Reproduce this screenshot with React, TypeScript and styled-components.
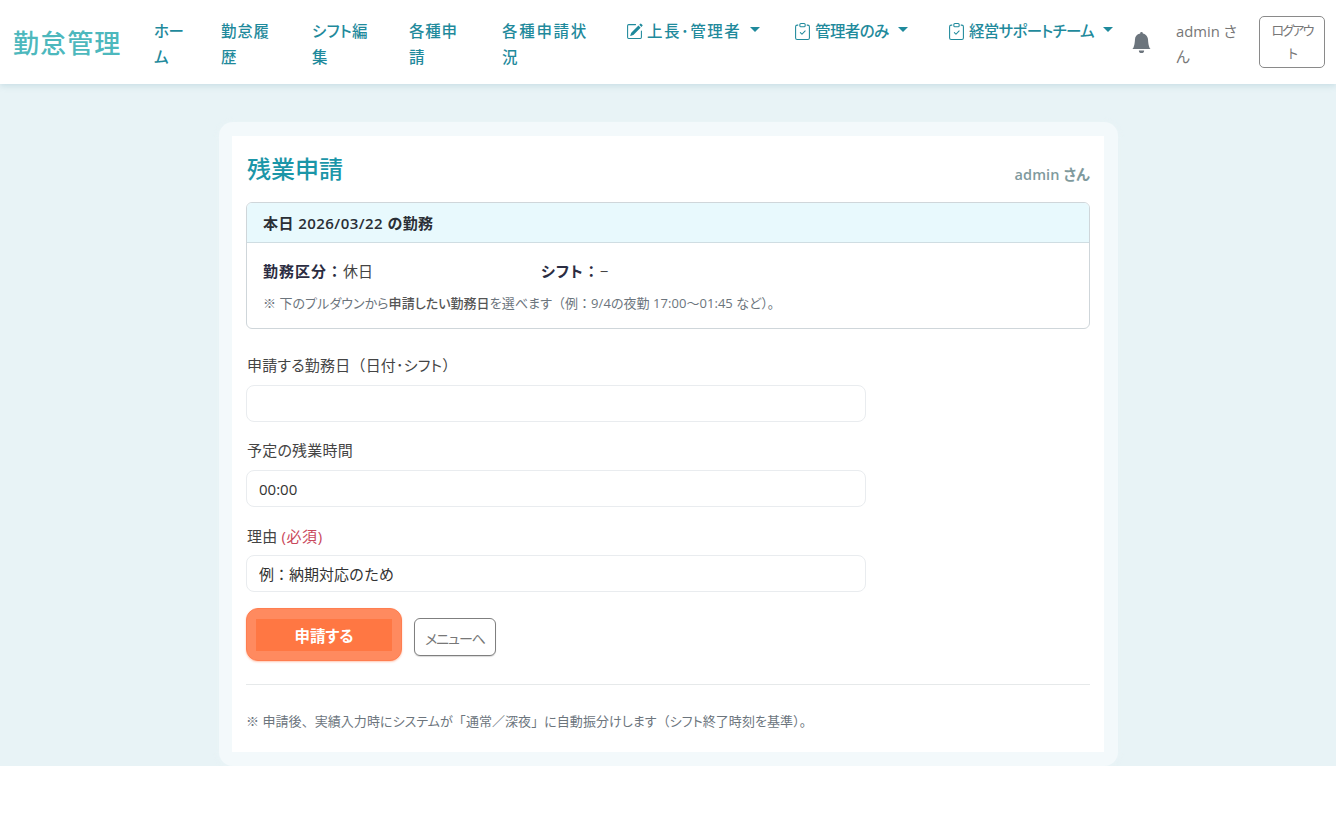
import React from "react";
import styled, { createGlobalStyle } from "styled-components";
import { BsPencilSquare, BsClipboardCheck, BsBellFill } from "react-icons/bs";

const Global = createGlobalStyle`
  html, body { margin: 0; padding: 0; background: #fff; }
  body {
    font-family: "Open Sans", "Noto Sans CJK JP", sans-serif;
    font-feature-settings: "palt";
    color: #333;
  }
  * { box-sizing: border-box; }
`;

const W = styled.span`
  font-feature-settings: normal;
`;

const Navbar = styled.nav`
  height: 84px;
  background: #fff;
  display: flex;
  align-items: center;
  padding-left: 13px;
  box-shadow: 0 2px 6px rgba(90, 150, 170, 0.22);
  position: relative;
`;
const Brand = styled.div`
  width: 141px;
  flex: none;
  font-size: 26px;
  font-weight: 500;
  letter-spacing: 1.1px;
  color: #4db8bd;
  white-space: nowrap;
`;
const NavLink = styled.a<{ $w: number; $text: number; $ls?: number }>`
  flex: none;
  width: ${(p) => p.$w}px;
  padding-top: 3px;
  padding-right: ${(p) => p.$w - p.$text}px;
  font-size: 15.5px;
  font-weight: 500;
  line-height: 26px;
  letter-spacing: ${(p) => p.$ls ?? 0.7}px;
  color: #1f8a9c;
  word-break: break-all;
`;
const Dropdown = styled.a<{ $w: number; $ls: number }>`
  flex: none;
  width: ${(p) => p.$w}px;
  align-self: flex-start;
  margin-top: 18px;
  display: flex;
  align-items: center;
  font-size: 15.5px;
  font-weight: 500;
  line-height: 26px;
  letter-spacing: ${(p) => p.$ls}px;
  color: #1f8a9c;
  white-space: nowrap;
  svg { flex: none; margin-right: 4px; font-size: 17px; }
  &::after {
    content: "";
    margin-left: 9px;
    margin-top: -4px;
    border-top: 5px solid #1f8a9c;
    border-left: 5px solid transparent;
    border-right: 5px solid transparent;
  }
`;
const Bell = styled.div`
  flex: none;
  width: 45px;
  padding-top: 1px;
  display: flex;
  color: #6c757d;
  font-size: 21px;
`;
const UserName = styled.div`
  flex: none;
  width: 83px;
  padding-top: 3px;
  padding-right: 18px;
  font-size: 14.8px;
  line-height: 25px;
  color: #777;
  word-break: break-all;
`;
const LogoutButton = styled.button`
  flex: none;
  width: 66px;
  height: 52px;
  padding: 0 8px;
  background: #fff;
  border: 1px solid #8a8a8a;
  border-radius: 5px;
  font: inherit;
  font-size: 13px;
  line-height: 23px;
  letter-spacing: -1.8px;
  color: #777;
`;

const Main = styled.main`
  background: #e8f3f6;
  padding-top: 38px;
  display: flex;
  justify-content: center;
`;
const Card = styled.section`
  width: 899px;
  margin-left: 1px;
  padding: 14px 14px 14px 13px;
  background: #f3f9fb;
  border-radius: 14px;
  box-shadow: 0 1px 6px rgba(235, 245, 248, 0.8);
`;
const Inner = styled.div`
  background: #fff;
  padding: 0 14px;
  height: 616px;
`;
const Head = styled.header`
  display: flex;
  justify-content: space-between;
  align-items: flex-end;
  height: 66px;
  padding: 0 0 15px 1px;
`;
const Title = styled.h1`
  margin: 0;
  font-size: 24px;
  font-weight: 500;
  line-height: 36px;
  color: #1b96a8;
`;
const Who = styled.div`
  font-size: 14.5px;
  font-weight: 600;
  letter-spacing: 0.1px;
  color: #7f9a9d;
  margin-bottom: 3px;
`;
const InfoBox = styled.div`
  border: 1px solid #cfd6da;
  border-radius: 6px;
  overflow: hidden;
  height: 127px;
`;
const InfoHeader = styled.div`
  height: 40px;
  padding: 0 16px;
  display: flex;
  align-items: center;
  background: #e8f9fd;
  border-bottom: 1px solid #cfdde2;
  font-size: 15px;
  font-weight: 600;
  letter-spacing: 0.45px;
  color: #2a2f36;
`;
const InfoBody = styled.div`
  padding: 16px 16px 0;
`;
const InfoRow = styled.div`
  display: flex;
  font-size: 15px;
  line-height: 24px;
  color: #444;
`;
const InfoCell = styled.div`
  width: 278px;
`;
const InfoKey = styled.b`
  font-weight: 600;
  letter-spacing: 1px;
  color: #2b2d42;
`;
const InfoNote = styled.p`
  margin: 11px 0 0;
  font-size: 13px;
  line-height: 18px;
  letter-spacing: 0.05px;
  color: #6c757d;
  b { font-weight: 500; color: #555; }
`;
const Form = styled.form`
  width: 620px;
  padding-top: 25px;
  display: flex;
  flex-direction: column;
`;
const Label = styled.label<{ $h?: number; $lift?: number }>`
  display: block;
  height: ${(p) => p.$h ?? 30}px;
  margin-top: ${(p) => -(p.$lift ?? 0)}px;
  padding-left: 1px;
  font-size: 15px;
  line-height: 22px;
  letter-spacing: 0.2px;
  color: #444;
`;
const Required = styled.span`
  letter-spacing: 0.6px;
  color: #c9485b;
`;
const Field = styled.input<{ $gap?: number; $fullWidth?: boolean }>`
  display: block;
  width: 620px;
  height: 37px;
  margin-bottom: ${(p) => p.$gap ?? 18}px;
  padding: 0 12px;
  background: #fff;
  border: 1px solid #e9ecef;
  border-radius: 8px;
  font: inherit;
  font-size: 15px;
  font-feature-settings: ${(p) => (p.$fullWidth ? "normal" : "inherit")};
  color: #333;
  outline: none;
`;
const Actions = styled.div`
  display: flex;
  align-items: flex-start;
  gap: 12px;
  margin-top: -2px;
`;
const SubmitButton = styled.button`
  width: 156px;
  height: 53px;
  padding: 10px 9px 9px;
  display: flex;
  background: #ff8a5f;
  border: 1px solid #ff7e50;
  border-radius: 12px;
  font: inherit;
  font-size: 15.5px;
  font-weight: 700;
  color: #fff;
  box-shadow: 0 1px 2px rgba(255, 120, 70, 0.4);
`;
const SubmitFace = styled.span`
  flex: 1;
  display: flex;
  align-items: center;
  justify-content: center;
  background: #ff7743;
`;
const MenuButton = styled.button`
  width: 82px;
  height: 38px;
  margin-top: 10px;
  padding: 1px 0 0;
  background: #fff;
  border: 1px solid #7f7f7f;
  border-radius: 6px;
  font: inherit;
  font-size: 14px;
  letter-spacing: -1px;
  color: #777;
  box-shadow: 0 1px 1px rgba(0, 0, 0, 0.15);
`;
const Rule = styled.hr`
  margin: 23px 0 0;
  border: 0;
  border-top: 1px solid #e6e9ea;
`;
const Foot = styled.p`
  margin: 27px 0 0;
  font-size: 13px;
  line-height: 18px;
  letter-spacing: 0.05px;
  color: #6c757d;
`;

export default function App() {
  return (
    <>
      <Global />
      <Navbar>
        <Brand>勤怠管理</Brand>
        <NavLink $w={67} $text={33} $ls={-0.4}>ホーム</NavLink>
        <NavLink $w={91} $text={54}>勤怠履歴</NavLink>
        <NavLink $w={97} $text={60} $ls={0.3}>シフト編集</NavLink>
        <NavLink $w={93} $text={54}>各種申請</NavLink>
        <NavLink $w={124} $text={92} $ls={1.7}>各種申請状況</NavLink>
        <Dropdown $w={168} $ls={1.5}><BsPencilSquare />上長･管理者</Dropdown>
        <Dropdown $w={154} $ls={-0.6}><BsClipboardCheck />管理者のみ</Dropdown>
        <Dropdown $w={183} $ls={-0.7}><BsClipboardCheck />経営サポートチーム</Dropdown>
        <Bell><BsBellFill /></Bell>
        <UserName>admin さん</UserName>
        <LogoutButton>ログアウト</LogoutButton>
      </Navbar>
      <Main>
        <Card>
          <Inner>
            <Head>
              <Title>残業申請</Title>
              <Who>admin さん</Who>
            </Head>
            <InfoBox>
              <InfoHeader>本日 2026/03/22 の勤務</InfoHeader>
              <InfoBody>
                <InfoRow>
                  <InfoCell><InfoKey>勤務区分<W>：</W></InfoKey>休日</InfoCell>
                  <InfoCell><InfoKey>シフト<W>：</W></InfoKey>−</InfoCell>
                </InfoRow>
                <InfoNote>
                  ※ 下のプルダウンから<b>申請したい勤務日</b>を選べます<W>（</W>例<W>：</W>9/4の夜勤 17:00〜01:45 など<W>）。</W>
                </InfoNote>
              </InfoBody>
            </InfoBox>
            <Form>
              <Label $h={31}>申請する勤務日<W>（</W>日付･シフト<W>）</W></Label>
              <Field readOnly value="" />
              <Label $h={31} $lift={1}>予定の残業時間</Label>
              <Field readOnly value="00:00" />
              <Label>理由 <Required>(必須)</Required></Label>
              <Field readOnly value="例：納期対応のため" $fullWidth />
            </Form>
            <Actions>
              <SubmitButton><SubmitFace>申請する</SubmitFace></SubmitButton>
              <MenuButton>メニューへ</MenuButton>
            </Actions>
            <Rule />
            <Foot>※ 申請後<W>、</W>実績入力時にシステムが<W>「</W>通常／深夜<W>」</W>に自動振分けします<W>（</W>シフト終了時刻を基準<W>）。</W></Foot>
          </Inner>
        </Card>
      </Main>
    </>
  );
}
